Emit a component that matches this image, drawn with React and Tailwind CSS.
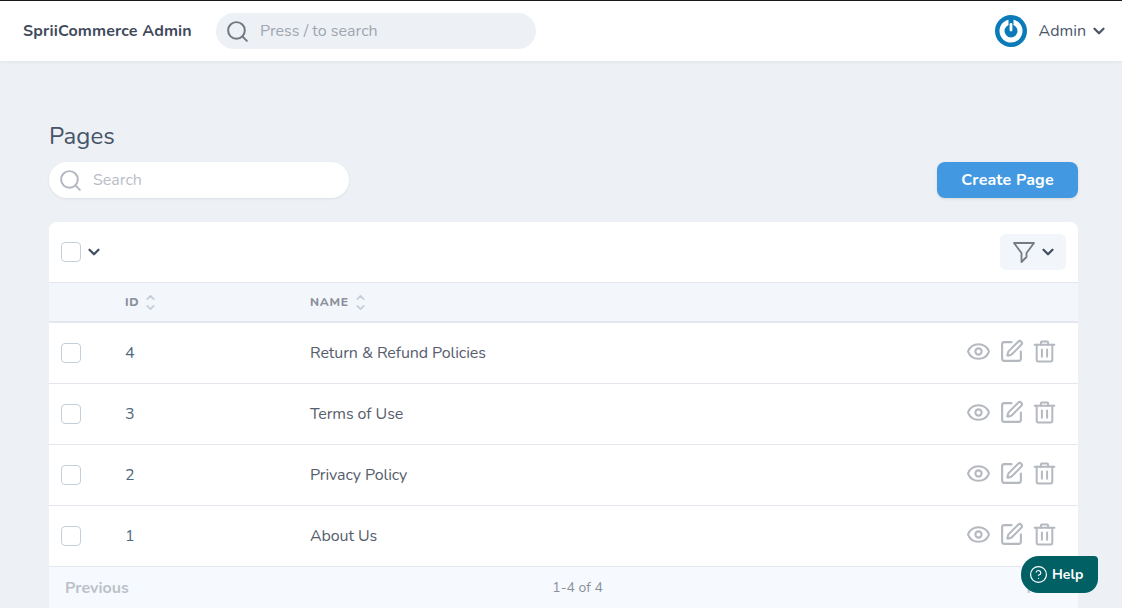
import React from "react";
import { Search, Eye, SquarePen, ChevronDown, ChevronUp, CircleHelp } from "lucide-react";

const rows = [
  { id: 4, name: "Return & Refund Policies" },
  { id: 3, name: "Terms of Use" },
  { id: 2, name: "Privacy Policy" },
  { id: 1, name: "About Us" },
];

function Box() {
  return <span className="block w-5 h-5 rounded-[4px] border border-[#c3d0dc] bg-white" />;
}

function Sort() {
  return (
    <span className="flex flex-col ml-[5px] text-[#c3ccd8]">
      <ChevronUp size={13} strokeWidth={3} className="-mb-[3px]" />
      <ChevronDown size={13} strokeWidth={3} />
    </span>
  );
}

function Logo() {
  return (
    <svg width="32" height="32" viewBox="0 0 32 32">
      <circle cx="16" cy="16" r="16" fill="#0b7ab8" />
      <circle cx="16" cy="16" r="9" fill="none" stroke="#fff" strokeWidth="5" />
      <rect x="13.5" y="4" width="5" height="6" fill="#0b7ab8" />
      <rect x="14.6" y="8" width="2.8" height="8.5" rx="1.4" fill="#fff" />
    </svg>
  );
}

function FunnelIcon() {
  return (
    <svg width="22" height="21" viewBox="0 0 22 21" fill="none" stroke="#747b84" strokeWidth="1.8" strokeLinejoin="round">
      <path d="M1 1h20l-7.5 10v4L8.5 20v-9z" />
    </svg>
  );
}

function TrashIcon() {
  return (
    <svg width="25" height="25" viewBox="0 0 24 24" fill="none" stroke="currentColor" strokeWidth="1.9" strokeLinecap="round" strokeLinejoin="round">
      <path d="M2.5 5.5h19" />
      <path d="M4.5 5.5V20a1.5 1.5 0 0 0 1.5 1.5h12a1.5 1.5 0 0 0 1.5-1.5V5.5" />
      <path d="M8.5 5.5V3.5a1 1 0 0 1 1-1h5a1 1 0 0 1 1 1v2" />
      <path d="M9.5 10v7" />
      <path d="M14.5 10v7" />
    </svg>
  );
}

export default function App() {
  return (
    <div className="h-screen overflow-hidden relative bg-[#edf0f4] text-[#4a5568] font-['Nunito','Lato','Noto_Sans',sans-serif]">
      <header className="h-[61px] border-t border-[#1a1a1a] bg-white shadow-[0_1px_4px_rgba(0,0,0,0.06)] flex items-center pl-[23px] pr-[14px]">
        <div className="w-[193px] text-[16px] font-bold tracking-[0.01em] text-[#3f4a5c] whitespace-nowrap">SpriiCommerce Admin</div>
        <div className="w-[320px] h-9 rounded-full bg-[#edf0f4] flex items-center pl-[9px] text-[#a0a6b0] text-[16px]">
          <Search size={25} strokeWidth={1.9} className="text-[#707780]" />
          <span className="ml-[10px]">Press / to search</span>
        </div>
        <div className="ml-auto flex items-center">
          <Logo />
          <span className="ml-3 text-[16px] text-[#4a5568]">Admin</span>
          <ChevronDown size={18} strokeWidth={3} className="ml-1 text-[#4a5568]" />
        </div>
      </header>

      <main className="pl-[49px] pr-[44px] pt-[60px]">
        <h1 className="text-[24px] leading-[30px] text-[#465468] font-normal">Pages</h1>
        <div className="flex items-center justify-between mt-[11px]">
          <div className="w-[300px] h-9 rounded-full bg-white shadow-[0_1px_3px_rgba(0,0,0,0.07)] flex items-center pl-[9px] text-[16px] text-[#b9bdc5]">
            <Search size={25} strokeWidth={1.9} className="text-[#b2b7bf]" />
            <span className="ml-[10px]">Search</span>
          </div>
          <button className="w-[141px] h-9 rounded-[8px] bg-[#4299e1] text-white text-[16px] font-bold tracking-[0.01em] shadow-[0_1px_3px_rgba(0,0,0,0.1)]">Create Page</button>
        </div>

        <section className="mt-6 bg-white rounded-t-[8px] overflow-hidden">
          <div className="h-[60px] flex items-center justify-between px-3">
            <div className="flex items-center">
              <Box />
              <ChevronDown size={18} strokeWidth={3} className="ml-1 text-[#434e60]" />
            </div>
            <div className="w-[66px] h-9 rounded-[6px] bg-[#f2f5f9] flex items-center pl-[13px]">
              <FunnelIcon />
              <ChevronDown size={18} strokeWidth={3} className="ml-[4px] text-[#434e60]" />
            </div>
          </div>

          <div className="h-[41px] border-t border-[#e4e8ee] border-b-2 bg-[#f3f6fa] flex items-center text-[12px] font-extrabold tracking-[0.06em] text-[#8a909c]">
            <div className="w-[76px]" />
            <div className="w-[185px] flex items-center"><span>ID</span><Sort /></div>
            <div className="flex items-center"><span>NAME</span><Sort /></div>
          </div>

          {rows.map((r) => (
            <div key={r.id} className="h-[61px] border-b border-[#e4e8ee] flex items-center">
              <div className="w-[76px] pl-3"><Box /></div>
              <div className="w-[185px] text-[16px] text-[#4f6a80]">{r.id}</div>
              <div className="text-[16px] tracking-[-0.006em] text-[#565d6c]">{r.name}</div>
              <div className="ml-auto flex items-center gap-2 pr-[21px] -mt-[4px] text-[#b4b8bf]">
                <Eye size={25} strokeWidth={2} />
                <SquarePen size={25} strokeWidth={2} />
                <TrashIcon />
              </div>
            </div>
          ))}

          <div className="h-[50px] bg-[#f6fafe] flex items-center justify-between pl-4 pr-4 pb-[9px] text-[14px]">
            <span className="font-bold text-[16px] text-[#bcc1c9]">Previous</span>
            <span className="text-[#8a8f99]">1-4 of 4</span>
            <span className="font-bold text-[16px] text-[#bcc1c9]">Next</span>
          </div>
        </section>
      </main>

      <div className="absolute left-[1021px] top-[556px] w-[77px] h-[37px] bg-[#016064] text-white rounded-tl-[18px] rounded-bl-[18px] rounded-tr-[4px] rounded-br-[14px] flex items-center pl-[8px] text-[14px] font-bold">
        <CircleHelp size={19} strokeWidth={1.5} />
        <span className="ml-1">Help</span>
      </div>
    </div>
  );
}
